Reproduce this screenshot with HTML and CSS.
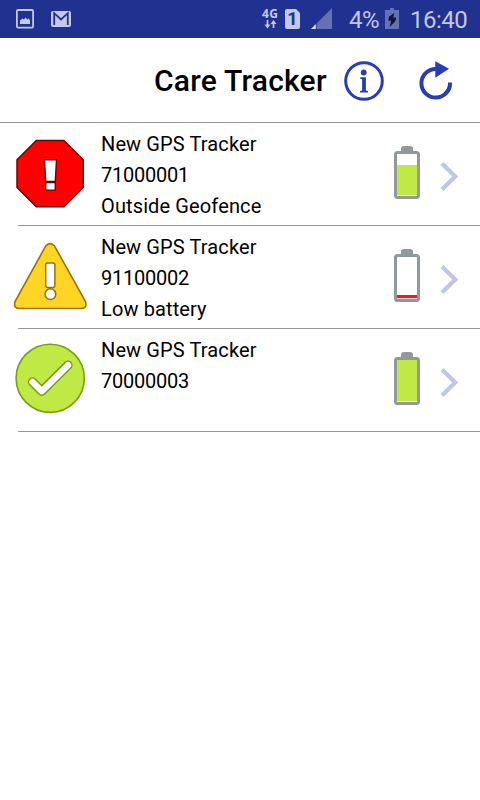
FILE: index.html
```
<!DOCTYPE html>
<html lang="en">
<head>
<meta charset="utf-8">
<title>Care Tracker</title>
<link rel="stylesheet" href="styles.css">
</head>
<body>
<div class="status">
  <svg class="status-left" width="80" height="38" viewBox="0 0 80 38">
    <rect x="16.900" y="10" width="16.200" height="17.600" rx="1.200" fill="none" stroke="#c3c8e4" stroke-width="1.800"/>
    <path d="M20 24v-3.400l2.500-2.200 1.500 1.200 1.600-2.200 1.600 2.200 1.300-1.400 1.500 2.200V24z" fill="#c3c8e4"/>
    <rect x="51" y="11" width="20" height="16" rx="2" fill="#c3c8e4"/>
    <path d="M54.200 25V13.200l6.800 6.300 6.800-6.300V25" fill="none" stroke="#203190" stroke-width="1.800"/>
  </svg>
  <div class="network">
    <span class="lte">4G</span>
    <svg width="14" height="9" viewBox="0 0 14 9"><path d="M3.500 0v6M9.500 8V2" stroke="#c3c8e4" stroke-width="1.700"/><path d="M.5 4.500h6l-3 4zM6.500 4h6l-3-4z" fill="#c3c8e4"/></svg>
  </div>
  <span class="sim">1</span>
  <svg class="signal" width="22" height="21" viewBox="0 0 22 21"><path d="M21 0v21H0z" fill="#6571b3"/><path d="M5 16v5H0z" fill="#d8dcef"/><path d="M5.300 15v6" stroke="#203190" stroke-width=".8"/></svg>
  <span class="percent">4%</span>
  <svg class="charge" width="14" height="21" viewBox="0 0 14 21"><path d="M5 0h4v2h5v19H0V2h5z" fill="#6571b3"/><path d="M9.500 5 4 8.500l-.8 4 3 .2L4.500 19l5.800-5.500.8-4-3 .1z" fill="#10153a"/></svg>
  <span class="clock">16:40</span>
</div>
<header class="header">
  <h1 class="title">Care Tracker</h1>
  <svg class="info" width="40" height="40" viewBox="0 0 40 40"><circle cx="20" cy="20" r="18.300" fill="none" stroke="#283cb4" stroke-width="3"/><circle cx="19.700" cy="11.500" r="2.900" fill="#283cb4"/><path d="M16.300 16.300h5.600v13.200l2.100.5v1.500h-8V30l2.100-.5V18.200l-1.800-.5z" fill="#283cb4"/></svg>
  <svg class="reload" width="34" height="40" viewBox="0 0 34 40"><path d="M16.900 9A14.300 14.300 0 1 0 31 22.500" fill="none" stroke="#283cb4" stroke-width="4"/><path d="M16.300 1.300v16.400l13.700-9z" fill="#283cb4"/></svg>
</header>
<main>
  <article class="row">
    <svg class="state" width="83" height="102" viewBox="18 0 83 102">
      <path d="M36.300 17.500h27.600l19.300 19.200v27.800L63.900 83.700H36.300L17 64.500V36.700z" fill="#f00" stroke="#6b0505" stroke-width="1.500"/>
      <path d="M44.500 36.700h12l-1.200 21.800h-9.600zM45.700 59.500h9.600v7.600h-9.600z" fill="#fff" stroke="#6b0505" stroke-width="1.400"/>
    </svg>
    <div class="details"><p>New GPS Tracker</p><p class="serial">71000001</p><p>Outside Geofence</p></div>
    <svg class="battery" width="26" height="53" viewBox="0 0 26 53"><path d="M7 7V2.500Q7 0 10 0h6q3 0 3 2.500V7z" fill="#92999c"/><rect x="1.500" y="6.500" width="23" height="45" rx="2" fill="#fff" stroke="#92999c" stroke-width="3"/><path d="M3 19h20v30H3z" fill="#bfe944"/></svg>
    <svg class="chevron" width="20" height="30" viewBox="0 0 20 30"><path d="m2 1.500 13.200 13L2 27.500" fill="none" stroke="#bfc6ea" stroke-width="4.200"/></svg>
  </article>
  <article class="row">
    <svg class="state" width="83" height="102" viewBox="18 0 83 102">
      <path d="M45.900 19.700q4.200-4.200 8.400 0L85.500 75.500q2 7-4.500 7H19.500q-6.500 0-4.500-7z" fill="#ffd525" stroke="#9a7304" stroke-width="1.600"/>
      <rect x="45.700" y="37" width="9.200" height="24.500" rx="2" fill="#fff" stroke="#9a7304" stroke-width="1.500"/>
      <circle cx="50.400" cy="68.200" r="5.400" fill="#fff" stroke="#9a7304" stroke-width="1.500"/>
    </svg>
    <div class="details"><p>New GPS Tracker</p><p class="serial">91100002</p><p>Low battery</p></div>
    <svg class="battery" width="26" height="53" viewBox="0 0 26 53"><path d="M7 7V2.500Q7 0 10 0h6q3 0 3 2.500V7z" fill="#92999c"/><rect x="1.500" y="6.500" width="23" height="45" rx="2" fill="#fff" stroke="#92999c" stroke-width="3"/><path d="M3 46h20v3.200H3z" fill="#e22323"/></svg>
    <svg class="chevron" width="20" height="30" viewBox="0 0 20 30"><path d="m2 1.500 13.200 13L2 27.500" fill="none" stroke="#bfc6ea" stroke-width="4.200"/></svg>
  </article>
  <article class="row">
    <svg class="state" width="83" height="102" viewBox="18 0 83 102">
      <circle cx="50.200" cy="49.300" r="34.100" fill="#bfe944" stroke="#7a9d14" stroke-width="1.600"/>
      <path d="m32.500 53 9.300 9.200 26.200-26" fill="none" stroke="#7a9d14" stroke-width="9.400" stroke-linecap="round" stroke-linejoin="round"/>
      <path d="m32.500 53 9.300 9.200 26.200-26" fill="none" stroke="#fff" stroke-width="6.400" stroke-linecap="round" stroke-linejoin="round"/>
    </svg>
    <div class="details"><p>New GPS Tracker</p><p class="serial">70000003</p></div>
    <svg class="battery" width="26" height="53" viewBox="0 0 26 53"><path d="M7 7V2.500Q7 0 10 0h6q3 0 3 2.500V7z" fill="#92999c"/><rect x="1.500" y="6.500" width="23" height="45" rx="2" fill="#fff" stroke="#92999c" stroke-width="3"/><path d="M3 8h20v41H3z" fill="#bfe944"/></svg>
    <svg class="chevron" width="20" height="30" viewBox="0 0 20 30"><path d="m2 1.500 13.200 13L2 27.500" fill="none" stroke="#bfc6ea" stroke-width="4.200"/></svg>
  </article>
</main>
</body>
</html>
```
FILE: styles.css
```
* { box-sizing: border-box; }
body { margin: 0; background: #fff; color: #000; font-family: Roboto, sans-serif; }
svg { display: block; flex: none; }
p, h1 { margin: 0; }
.status { display: flex; height: 38px; background: #203190; color: #c3c8e4; }
.network { width: 20px; margin: 8px 0 0 181px; }
.network svg { margin: 1px 0 0 3px; }
.lte { display: block; font: 700 12px/11px "Open Sans", sans-serif; letter-spacing: .5px; margin-left: 1px; white-space: nowrap; }
.sim { width: 15px; height: 20px; margin: 9px 0 0 4px; border-radius: 2px; background: #c3c8e4; color: #203190; font-size: 18px; font-weight: 700; line-height: 20px; text-align: center; clip-path: polygon(0 0, 11px 0, 100% 4px, 100% 100%, 0 100%); }
.signal { margin: 8px 0 0 11px; }
.percent { width: 30px; margin: 1px 0 0 16px; font-size: 24px; line-height: 38px; letter-spacing: -.6px; white-space: nowrap; }
.charge { margin: 8px 0 0 6px; }
.clock { margin: 1px 0 0 11px; font-size: 24px; line-height: 38px; letter-spacing: -.5px; }
.header { display: flex; height: 85px; border-bottom: 1px solid #999; }
.title { width: 190px; margin-left: 154px; padding-top: 1px; font-size: 30px; font-weight: 500; line-height: 84px; letter-spacing: .22px; white-space: nowrap; }
.info { margin-top: 23px; }
.reload { margin: 22px 0 0 35px; }
.row { display: flex; height: 103px; margin-left: 18px; border-bottom: 1px solid #999; }
.state { overflow: visible; }
.details { flex: 1; padding-top: 6px; font-size: 20px; line-height: 31px; letter-spacing: .12px; }
.serial { letter-spacing: -.25px; }
.battery { margin-top: 23px; }
.chevron { margin: 39px 20px 0 20px; }
```
